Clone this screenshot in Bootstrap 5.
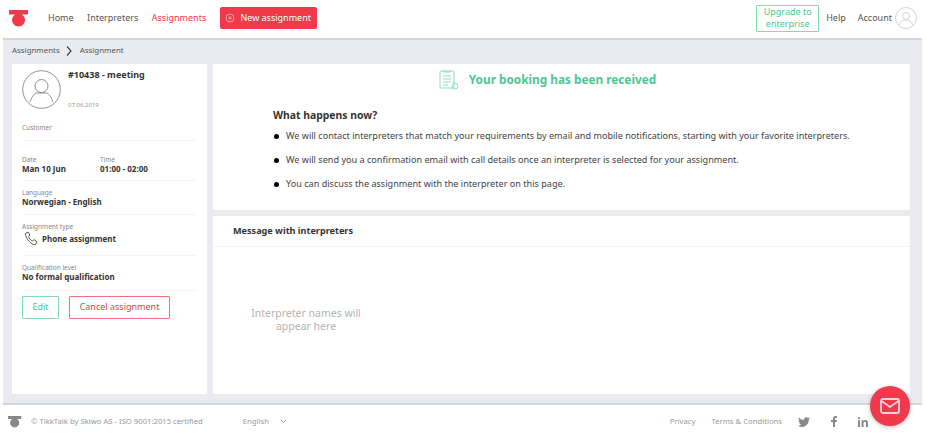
<!DOCTYPE html>
<html lang="en">
<head>
<meta charset="utf-8">
<title>Assignment</title>
<link href="https://cdn.jsdelivr.net/npm/bootstrap@5.3.0/dist/css/bootstrap.min.css" rel="stylesheet">
<style>
html,body{height:436px;overflow:hidden}
body{font-family:"Noto Sans","Open Sans",sans-serif;font-size:9px;color:#333;background:#fff;line-height:1.2;display:flex;flex-direction:column}
.topbar{height:38px;padding:0 10px 2px 9px;flex:none}
.topbar a{color:#555;text-decoration:none;font-size:9px}
.topbar a.act{color:#f0394b}
.logo{margin-right:19px}
.navgap{gap:13.5px}
.newbtn{background:#f0394b;color:#fff!important;border-radius:2px;height:22px;width:97px;font-size:9px!important;gap:5px}
.upbtn{border:1px solid #7fdcb4;color:#4fc795!important;font-size:9px!important;line-height:12px;width:63px;height:27px;text-align:center;border-radius:1px;margin-right:7px}
.acct{margin-left:12px!important;margin-right:3px}
.stage{background:#e9ebf0;margin:0 5px 0 3px;height:367px;border-top:2px solid #d3d6dc;border-bottom:2px solid #d3d6dc;padding:0 12px 0 9px;flex:none}
.crumbs{height:24px;padding-bottom:3px;font-size:7.9px;color:#555;gap:6px}
.crumbs svg{margin-right:2px}
.panes{gap:6px;height:330px}
.sidecard{width:195px;background:#fff;padding:6px 10px;flex:none}
.maincol{gap:6px;flex:1 1 auto;min-width:0}
.ava{gap:7px;height:51px}
.title{font-size:9px;font-weight:700;color:#333}
.stamp{font-size:6px;color:#999;margin-top:21px}
.lbl{font-size:6.5px;color:#888;line-height:9px}
.val{font-size:8px;font-weight:700;color:#333;line-height:10px}
.blk{border-bottom:1px solid #f3f4f6}
.b1{height:20px;padding-top:2px}
.b2{height:40px;padding-top:14px}
.datecol{width:78px}
.b3{height:34px;padding-top:7px}
.b4{height:41px;padding-top:7px}
.b5{height:35px;padding-top:7px}
.typ{gap:4px;margin:0 0 0 2px}
.acts{gap:10px;margin-top:5px}
.editb,.cancb{height:23px;font-size:9px;background:#fff;border-radius:1px;padding:0;display:flex;align-items:center;justify-content:center}
.editb{width:37px;border:1px solid #7fdcb4;color:#4fc795}
.cancb{width:101px;border:1px solid #f0707d;color:#f0394b}
.okcard{background:#fff;height:146px;padding-top:5px}
.okhead{gap:10px;color:#4cc794;font-size:11.8px;font-weight:700;height:21px;padding-right:28px}
.how{padding:19px 0 0 60px}
.how h2{font-size:10.4px;font-weight:700;color:#333;margin:0 0 3px}
.how ul{list-style:none;margin:0;padding:0;font-size:9.1px;color:#444}
.how li{display:flex;align-items:center;gap:7px;height:24px}
.how li i{width:5px;height:5px;margin-left:1px;border-radius:50%;background:#000;flex:none}
.msgcard{background:#fff;flex:1 1 auto}
.msghead{height:31px;padding:1px 20px 0;font-size:9.1px;font-weight:700;color:#333;border-bottom:1px solid #f3f4f6}
.msgbody{width:186px;padding:0 35px;margin-top:60px;text-align:center;font-size:10.5px;color:#b5b5b5;line-height:13px}
.foot{height:31px;flex:none;padding:2px 59px 0 8px;color:#999;font-size:7.7px}
.foot a{color:#999;text-decoration:none}
.fleft{gap:9px}
.lang{margin-left:31px;gap:11px}
.fright{gap:16px}
.fgap{margin-left:5px}
.fab{position:absolute;left:870px;top:386px;width:40px;height:40px;border-radius:50%;background:#f0394b;box-shadow:0 1px 4px rgba(0,0,0,.25)}
</style>
</head>
<body>
<nav class="topbar d-flex align-items-center">
  <svg class="logo" width="20" height="18" viewBox="0 0 20 18"><path d="M0 1h19v4.500h-6a6.500 6.500 0 1 1-7 0H0z" fill="#f0394b"/></svg>
  <div class="d-flex align-items-center navgap">
    <a href="#">Home</a><a href="#">Interpreters</a><a href="#" class="act">Assignments</a>
    <a href="#" class="newbtn d-flex align-items-center justify-content-center"><svg width="10" height="10" viewBox="0 0 10 10" fill="none" stroke="#ffb3ba" stroke-width=".8"><circle cx="5" cy="5" r="4"/><path d="M5 3v4M3 5h4"/></svg>New assignment</a>
  </div>
  <div class="ms-auto d-flex align-items-center">
    <a href="#" class="upbtn">Upgrade to enterprise</a>
    <a href="#">Help</a>
    <a href="#" class="acct">Account</a>
    <svg width="22" height="22" viewBox="0 0 22 22" fill="none" stroke="#c9c9c9" stroke-width=".8"><circle cx="11" cy="11" r="10.500"/><circle cx="11" cy="9" r="3.500"/><path d="M4.500 18c1-4 3.500-5 6.500-5s5.500 1 6.500 5"/></svg>
  </div>
</nav>
<main class="stage">
  <div class="crumbs d-flex align-items-center">
    <span>Assignments</span>
    <svg width="6" height="10" viewBox="0 0 6 10" fill="none" stroke="#444" stroke-width="1.200"><path d="M1 .5 5 5 1 9.500"/></svg>
    <span>Assignment</span>
  </div>
  <div class="panes d-flex">
    <aside class="sidecard">
      <div class="ava d-flex">
        <svg width="39" height="39" viewBox="0 0 39 39" fill="none" stroke="#777" stroke-width=".8"><circle cx="19.500" cy="19.500" r="18.800"/><circle cx="19.500" cy="16" r="6.500"/><path d="M8 32c2-7 6-9 6-9h11s4 2 6 9"/></svg>
        <div><div class="title">#10438 - meeting</div><div class="stamp">07.06.2019</div></div>
      </div>
      <div class="blk b1"><div class="lbl">Customer</div></div>
      <div class="blk b2 d-flex">
        <div class="datecol"><div class="lbl">Date</div><div class="val">Man 10 Jun</div></div>
        <div><div class="lbl">Time</div><div class="val">01:00 - 02:00</div></div>
      </div>
      <div class="blk b3"><div class="lbl">Language</div><div class="val">Norwegian - English</div></div>
      <div class="blk b4"><div class="lbl">Assignment type</div>
        <div class="typ d-flex align-items-center val"><svg width="14" height="15" viewBox="0 0 14 15" fill="none" stroke="#555" stroke-width="1"><path d="M1.500 2.500 4 1l2 3-1.500 1.500c.5 2 2 3.500 4 4.500L10 8.500l3 2.500-1.500 2.500C9 15 1 8 1.500 2.500z"/></svg>Phone assignment</div>
      </div>
      <div class="blk b5"><div class="lbl">Qualification level</div><div class="val">No formal qualification</div></div>
      <div class="acts d-flex">
        <button type="button" class="editb">Edit</button>
        <button type="button" class="cancb">Cancel assignment</button>
      </div>
    </aside>
    <div class="maincol d-flex flex-column">
      <section class="okcard">
        <div class="okhead d-flex align-items-center justify-content-center">
          <svg width="20" height="21" viewBox="0 0 20 21" fill="none" stroke="#7fdcb4" stroke-width=".9"><rect x="1" y="2" width="14" height="17" rx="1"/><path d="M5 1v2h6V1M4 7h8M4 10h8M4 13h8M4 16h5"/><circle cx="16" cy="17" r="3"/></svg>
          Your booking has been received
        </div>
        <div class="how">
          <h2>What happens now?</h2>
          <ul>
            <li><i></i>We will contact interpreters that match your requirements by email and mobile notifications, starting with your favorite interpreters.</li>
            <li><i></i>We will send you a confirmation email with call details once an interpreter is selected for your assignment.</li>
            <li><i></i>You can discuss the assignment with the interpreter on this page.</li>
          </ul>
        </div>
      </section>
      <section class="msgcard">
        <div class="msghead d-flex align-items-center">Message with interpreters</div>
        <div class="msgbody">Interpreter names will appear here</div>
      </section>
    </div>
  </div>
</main>
<footer class="foot d-flex align-items-center justify-content-between">
  <div class="fleft d-flex align-items-center">
    <svg width="14" height="13" viewBox="0 0 20 18"><path d="M0 1h19v4.500h-6a6.500 6.500 0 1 1-7 0H0z" fill="#888"/></svg>
    <span>© TikkTalk by Skiwo AS - ISO 9001:2015 certified</span>
    <span class="lang d-flex align-items-center">English <svg width="7" height="5" viewBox="0 0 7 5" fill="none" stroke="#999"><path d="m1 1 2.500 2.500L6 1"/></svg></span>
  </div>
  <div class="fright d-flex align-items-center">
    <a href="#">Privacy</a><a href="#">Terms &amp; Conditions</a>
    <svg width="12" height="10" viewBox="0 0 12 10" fill="#888"><path d="M12 1.200c-.4.200-.9.300-1.400.4.500-.3.900-.8 1.100-1.300-.5.300-1 .5-1.600.6A2.500 2.500 0 0 0 5.900 3.100C3.900 3 2.100 2 .9.500c-.7 1.100-.3 2.500.7 3.200-.4 0-.8-.1-1.100-.3 0 1.200.8 2.200 2 2.500-.4.100-.7.100-1.100 0 .3 1 1.200 1.700 2.300 1.700A5 5 0 0 1 0 8.700 7 7 0 0 0 10.800 2.500c.5-.3.900-.8 1.200-1.300z"/></svg>
    <svg class="fgap" width="6" height="11" viewBox="0 0 6 11" fill="#888"><path d="M4 11V6h1.700L6 4H4V2.800C4 2.200 4.200 1.900 5 1.900h1V.1C5.700 0 5.200 0 4.600 0 3 0 2 1 2 2.600V4H0v2h2v5z"/></svg>
    <svg class="fgap" width="10" height="10" viewBox="0 0 10 10" fill="#888"><path d="M0 3.300h2V10H0zM1 0a1.100 1.100 0 1 1 0 2.300A1.100 1.100 0 0 1 1 0zM3.500 3.300h2v.9c.4-.6 1-1.100 2-1.100C9.500 3.100 10 4.400 10 6.200V10H8V6.600c0-.9-.1-1.800-1.100-1.800S5.500 5.600 5.500 6.500V10h-2z"/></svg>
  </div>
</footer>
<a href="#" class="fab d-flex align-items-center justify-content-center" aria-label="Messages">
  <svg width="20" height="16" viewBox="0 0 20 16" fill="none" stroke="#ffd7db" stroke-width="1.800"><rect x="1" y="1" width="18" height="14" rx="2"/><path d="m1.500 3 8.500 6 8.500-6"/></svg>
</a>
</body>
</html>
